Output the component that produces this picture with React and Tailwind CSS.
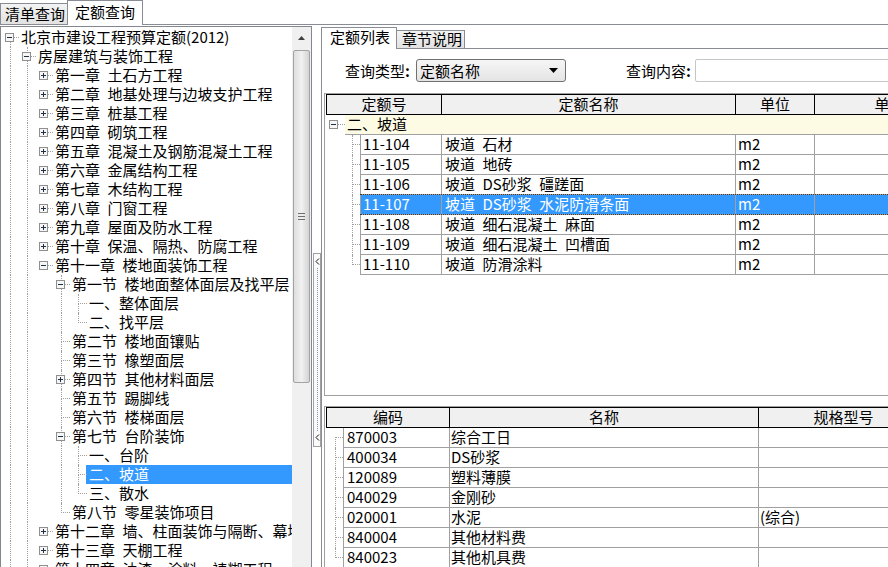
import React from "react";

// tree data: [level, label, expander, selected]
const TREE = [
  [0, "北京市建设工程预算定额(2012)", "-"],
  [1, "房屋建筑与装饰工程", "-"],
  [2, "第一章\u2002土石方工程", "+"],
  [2, "第二章\u2002地基处理与边坡支护工程", "+"],
  [2, "第三章\u2002桩基工程", "+"],
  [2, "第四章\u2002砌筑工程", "+"],
  [2, "第五章\u2002混凝土及钢筋混凝土工程", "+"],
  [2, "第六章\u2002金属结构工程", "+"],
  [2, "第七章\u2002木结构工程", "+"],
  [2, "第八章\u2002门窗工程", "+"],
  [2, "第九章\u2002屋面及防水工程", "+"],
  [2, "第十章\u2002保温、隔热、防腐工程", "+"],
  [2, "第十一章\u2002楼地面装饰工程", "-"],
  [3, "第一节\u2002楼地面整体面层及找平层", "-"],
  [4, "一、整体面层"],
  [4, "二、找平层"],
  [3, "第二节\u2002楼地面镶贴"],
  [3, "第三节\u2002橡塑面层"],
  [3, "第四节\u2002其他材料面层", "+"],
  [3, "第五节\u2002踢脚线"],
  [3, "第六节\u2002楼梯面层"],
  [3, "第七节\u2002台阶装饰", "-"],
  [4, "一、台阶"],
  [4, "二、坡道", null, true],
  [4, "三、散水"],
  [3, "第八节\u2002零星装饰项目"],
  [2, "第十二章\u2002墙、柱面装饰与隔断、幕墙工程", "+"],
  [2, "第十三章\u2002天棚工程", "+"],
  [2, "第十四章\u2002油漆、涂料、裱糊工程", "+"],
  [2, "第十五章\u2002其他装饰工程", "+"],
  [1, "仿古建筑工程", "+"],
  [0, "其他", "+"],
];

const QUOTAS = [
  ["11-104", "坡道\u2002石材"],
  ["11-105", "坡道\u2002地砖"],
  ["11-106", "坡道\u2002DS砂浆\u2002礓蹉面"],
  ["11-107", "坡道\u2002DS砂浆\u2002水泥防滑条面", true],
  ["11-108", "坡道\u2002细石混凝土\u2002麻面"],
  ["11-109", "坡道\u2002细石混凝土\u2002凹槽面"],
  ["11-110", "坡道\u2002防滑涂料"],
];

const MATERIALS = [
  ["870003", "综合工日", ""],
  ["400034", "DS砂浆", ""],
  ["120089", "塑料薄膜", ""],
  ["040029", "金刚砂", ""],
  ["020001", "水泥", "(综合)"],
  ["840004", "其他材料费", ""],
  ["840023", "其他机具费", ""],
];

const ancestor = (i, d) => {
  for (let j = i; j >= 0; j--) if (TREE[j][0] === d) return j;
  return -1;
};

const laterSibling = (k) => {
  const lv = TREE[k][0];
  for (let j = k + 1; j < TREE.length; j++) {
    if (TREE[j][0] < lv) return false;
    if (TREE[j][0] === lv) return true;
  }
  return false;
};

function ExpBox({ plus }) {
  return (
    <svg width="9" height="9" className="block">
      <rect x="0.5" y="0.5" width="8" height="8" fill="#f6f6f6" stroke="#8f8f8f" />
      <path d="M2 4.5H7" stroke="#1f2f45" />
      {plus && <path d="M4.5 2V7" stroke="#1f2f45" />}
    </svg>
  );
}

const vline = "absolute border-l border-dotted border-[#a0a0a0]";

function TreeRow({ i }) {
  const [lv, label, exp, sel] = TREE[i];
  const lines = [];
  for (let d = 0; d < lv; d++) {
    if (d === 2) continue;
    if (laterSibling(ancestor(i, d)))
      lines.push(<span key={"a" + d} className={vline + " top-0 h-[19px]"} style={{ left: 9 + 17 * d }} />);
  }
  if (lv !== 2) {
    if (i > 0) lines.push(<span key="t" className={vline + " top-0 h-[10px]"} style={{ left: 9 + 17 * lv }} />);
    if (laterSibling(i)) lines.push(<span key="b" className={vline + " top-[9px] h-[10px]"} style={{ left: 9 + 17 * lv }} />);
  }
  return (
    <div className="relative h-[19px] flex" style={{ paddingLeft: 20 + 17 * lv }}>
      {lines}
      <span className="absolute top-[9px] w-[9px] border-t border-dotted border-[#a0a0a0]" style={{ left: 9 + 17 * lv }} />
      {exp && (
        <span className="absolute top-[5px]" style={{ left: 4 + 17 * lv }}>
          <ExpBox plus={exp === "+"} />
        </span>
      )}
      <span className={sel ? "flex-1 -ml-[3px] pl-[3px] bg-[#3399ff] text-white whitespace-nowrap" : "whitespace-nowrap"}>{label}</span>
    </div>
  );
}

function Scrollbar() {
  return (
    <div className="w-[19px] shrink-0 bg-[#f0f0f0] flex flex-col">
      <div className="h-[22px] flex items-center justify-center">
        <svg width="7" height="4"><path d="M0 4L3.5 0L7 4Z" fill="#404040" /></svg>
      </div>
      <div className="mx-px mt-px h-[333px] rounded-[2px] border border-[#a3a3a3] bg-linear-to-r from-[#dedede] via-[#f1f1f1] to-[#d3d3d3] flex flex-col items-center justify-center gap-[2px]">
        <div className="w-[7px] h-px bg-[#6e6e6e]" />
        <div className="w-[7px] h-px bg-[#6e6e6e]" />
        <div className="w-[7px] h-px bg-[#6e6e6e]" />
      </div>
    </div>
  );
}

function Chevron() {
  return (
    <svg width="5" height="7" className="block shrink-0">
      <path d="M4 0.5L1 3.5L4 6.5" stroke="#111" fill="none" />
    </svg>
  );
}

function QuotaTable() {
  return (
    <div className="ml-[2px] mt-[11px] h-[303px] border-l border-t border-b border-[#a0a0a0] pl-px overflow-hidden">
      <div className="flex h-[21px] border-y border-black bg-[#f0f0f0] w-[640px] leading-[18px]">
        <div className="w-[115px] shrink-0 border-l border-black text-center">定额号</div>
        <div className="w-[294px] shrink-0 border-l border-black text-center">定额名称</div>
        <div className="w-[79px] shrink-0 border-l border-black text-center">单位</div>
        <div className="w-[150px] shrink-0 border-l border-black text-center">单价</div>
      </div>
      <div className="flex h-[20px] w-[640px]">
        <div className="w-[19px] shrink-0 relative">
          <span className="absolute left-[3px] top-[5px]"><ExpBox /></span>
          <span className="absolute left-[12px] top-[9px] w-[7px] border-t border-dotted border-[#a0a0a0]" />
        </div>
        <div className="flex-1 bg-[#fdfbe3] border-b border-[#a0a0a0] pl-[2px]">二、坡道</div>
      </div>
      {QUOTAS.map(([code, name, sel], i) => (
        <div key={code} className="flex h-[20px] w-[640px]">
          <div className="w-[34px] shrink-0 relative">
            <span className={vline + " left-[26px] top-0 h-[10px]"} />
            {i < QUOTAS.length - 1 && <span className={vline + " left-[26px] top-[9px] h-[11px]"} />}
            <span className="absolute left-[26px] top-[9px] w-[8px] border-t border-dotted border-[#a0a0a0]" />
          </div>
          <div className={"relative flex flex-1 border-b border-[#a0a0a0] " + (sel ? "bg-[#3399ff] text-white" : "")}>
            {sel && <span className="absolute inset-x-0 -top-px -bottom-px border-y border-dotted border-[#3a3a3a]" />}
            <div className="w-[81px] shrink-0 border-l border-[#a0a0a0] pl-[2px]">{code}</div>
            <div className="w-[294px] shrink-0 border-l border-[#a0a0a0] pl-[3px] whitespace-nowrap">{name}</div>
            <div className="w-[79px] shrink-0 border-l border-[#a0a0a0] pl-[2px]">m2</div>
            <div className="w-[150px] shrink-0 border-l border-[#a0a0a0]" />
          </div>
        </div>
      ))}
    </div>
  );
}

function MaterialTable() {
  return (
    <div className="ml-[2px] mt-[10px] border-l border-t border-[#a0a0a0] pl-px overflow-hidden">
      <div className="flex h-[21px] border-y border-black bg-[#f0f0f0] w-[640px] leading-[18px]">
        <div className="w-[123px] shrink-0 border-l border-black text-center">编码</div>
        <div className="w-[309px] shrink-0 border-l border-black text-center">名称</div>
        <div className="w-[170px] shrink-0 border-l border-black text-center">规格型号</div>
      </div>
      {MATERIALS.map(([code, name, spec], i) => (
        <div key={code} className="flex h-[20px] w-[640px]">
          <div className="w-[17px] shrink-0 relative">
            {i > 0 && <span className={vline + " left-[9px] top-0 h-[10px]"} />}
            {i < MATERIALS.length - 1 && <span className={vline + " left-[9px] top-[9px] h-[11px]"} />}
            <span className="absolute left-[9px] top-[9px] w-[8px] border-t border-dotted border-[#a0a0a0]" />
          </div>
          <div className="flex flex-1 border-b border-[#a0a0a0]">
            <div className="w-[106px] shrink-0 border-l border-[#a0a0a0] pl-[3px]">{code}</div>
            <div className="w-[309px] shrink-0 border-l border-[#a0a0a0] pl-px">{name}</div>
            <div className="w-[170px] shrink-0 border-l border-[#a0a0a0] pl-px">{spec}</div>
          </div>
        </div>
      ))}
    </div>
  );
}

function App() {
  return (
    <div className="w-[888px] h-[567px] overflow-hidden bg-white text-black text-[15px] leading-[17px] font-['Noto_Sans_CJK_SC',sans-serif] flex flex-col">
      {/* top tabs */}
      <div className="h-[25px] shrink-0 flex items-end border-b border-[#898c95]">
        <div className="h-[21px] w-[68px] border border-b-0 border-[#898c95] bg-linear-to-b from-[#f3f3f3] to-[#e2e2e2] pl-[4px] leading-[19px]">清单查询</div>
        <div className="relative h-[25px] w-[76px] -mb-px -ml-px border border-b-0 border-[#898c95] bg-white pl-[7px] leading-[22px]">定额查询</div>
      </div>

      <div className="flex h-[600px] shrink-0 pt-px">
        {/* left tree */}
        <div className="w-[312px] shrink-0 border border-[#828790] flex">
          <div className="w-[291px] overflow-hidden pt-px">
            {TREE.map((_, i) => <TreeRow key={i} i={i} />)}
          </div>
          <Scrollbar />
        </div>

        {/* splitter */}
        <div className="w-[9px] shrink-0 pt-[227px] pl-px">
          <div className="h-[194px] w-[8px] border border-[#a0a0a0] bg-[#fafafa] flex flex-col items-center pt-[4px] pb-[5px]">
            <Chevron />
            <div className="flex-1 my-[3px] border-l border-dotted border-[#7f93b5]" />
            <Chevron />
          </div>
        </div>

        {/* right panel */}
        <div className="flex-1 min-w-0 flex flex-col pt-px">
          <div className="h-[21px] shrink-0 flex items-start">
            <div className="relative z-10 h-[22px] w-[76px] border border-b-0 border-[#898c95] bg-white pl-[8px] leading-[18px]">定额列表</div>
            <div className="mt-[3px] h-[18px] w-[68px] border border-l-0 border-b-0 border-[#898c95] bg-linear-to-b from-[#f3f3f3] to-[#e2e2e2] pl-[5px] leading-[16px]">章节说明</div>
          </div>
          <div className="flex-1 border-l border-t border-[#898c95] bg-white pt-[10px] overflow-hidden">
            <div className="h-[23px] flex items-center pl-[23px]">
              <div className="w-[71px] shrink-0 whitespace-nowrap">查询类型<span className="font-bold">:</span></div>
              <div className="w-[150px] h-[23px] shrink-0 border border-[#707070] rounded-[3px] bg-linear-to-b from-[#f6f6f6] to-[#e4e4e4] flex items-center justify-between pl-[3px] pr-[7px]">
                <span>定额名称</span>
                <svg width="9" height="5"><path d="M0 0H9L4.5 5Z" fill="#000" /></svg>
              </div>
              <div className="ml-[60px] w-[69px] shrink-0 whitespace-nowrap">查询内容<span className="font-bold">:</span></div>
              <div className="w-[260px] h-[23px] shrink-0 border border-[#c6c6c6] rounded-[2px] bg-white" />
            </div>
            <QuotaTable />
            <MaterialTable />
          </div>
        </div>
      </div>
    </div>
  );
}

export default App;
